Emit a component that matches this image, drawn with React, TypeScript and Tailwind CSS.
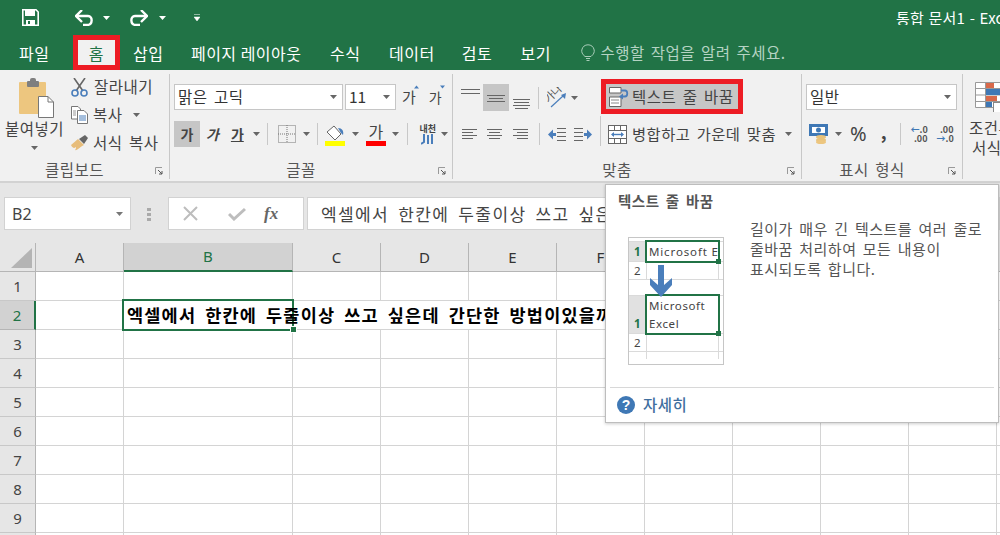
import React from "react";

const Caret = ({ c = "#666", className = "" }: { c?: string; className?: string }) => (
  <svg width="7" height="4" viewBox="0 0 7 4" className={className}>
    <path d="M0 0h7L3.500 4z" fill={c} />
  </svg>
);

const Launcher = () => (
  <svg width="8" height="8" viewBox="0 0 8 8" className="absolute right-[6px] top-[6px]">
    <path d="M0.500 7V0.500H7" fill="none" stroke="#999" />
    <path d="M3 3l4 4M7 4v3H4" fill="none" stroke="#555" />
  </svg>
);

const Sep = ({ className = "" }: { className?: string }) => <div className={`w-px h-[22px] bg-[#c8c8c8] shrink-0 ${className}`} />;

const Lines = ({ rows, w = 18 }: { rows: [number, number, number][]; w?: number }) => (
  <svg width={w} height="14" viewBox={`0 0 ${w} 14`}>
    {rows.map(([y, a, b], i) => (
      <path key={i} d={`M${a} ${y + 0.5}H${b}`} stroke="#666" fill="none" />
    ))}
  </svg>
);

const Group = ({ w, label, launcher = true, children }: { w: string; label?: string; launcher?: boolean; children: React.ReactNode }) => (
  <div className={`${w} h-[105px] mt-[4px] flex flex-col border-r border-[#c8c8c8] shrink-0`}>
    <div className="h-[87px] relative">{children}</div>
    <div className="h-[18px] relative flex items-center justify-center pr-[20px] text-[15.500px] leading-none text-[#555]">
      {label}
      {launcher && <Launcher />}
    </div>
  </div>
);

const Combo = ({ w, text, pad = "pl-[3px]" }: { w: string; text: string; pad?: string }) => (
  <div className={`${w} h-[26px] bg-white border border-[#c6c6c6] flex items-center justify-between ${pad} pr-[5px] text-[15.500px] text-[#333] shrink-0`}>
    <span className="leading-none">{text}</span>
    <Caret />
  </div>
);

const Paste = () => (
  <svg width="36" height="40" viewBox="0 0 36 40">
    <rect x="0" y="4" width="27" height="32" rx="1" fill="#edc67f" />
    <rect x="8" y="3" width="12" height="6" rx="1" fill="#7f7f7f" />
    <rect x="11" y="0" width="6" height="5" rx="2" fill="#7f7f7f" />
    <path d="M19.500 18.500H29l5.500 5.500v15.500h-15z" fill="#fff" stroke="#777" />
    <path d="M29 18.500V24h5.500" fill="none" stroke="#777" />
  </svg>
);

const Scissors = () => (
  <svg width="18" height="19" viewBox="0 0 18 19">
    <path d="M3 0l9 13M14 0L5 13" stroke="#666" strokeWidth="1.600" fill="none" />
    <circle cx="4" cy="15" r="3" fill="none" stroke="#4a7ebb" strokeWidth="1.600" />
    <circle cx="13" cy="15" r="3" fill="none" stroke="#4a7ebb" strokeWidth="1.600" />
  </svg>
);

const CopyIcon = () => (
  <svg width="17" height="18" viewBox="0 0 17 18">
    <path d="M0.500 0.500H7l2.500 2.500v10H0.500z" fill="#fff" stroke="#777" />
    <path d="M6.500 4.500H13l3.500 3.500v9.500h-10z" fill="#fff" stroke="#777" />
    <path d="M8 10h7M8 12h7M8 14h7" stroke="#4a7ebb" />
    <path d="M2 5h3M2 7h3M2 9h3" stroke="#999" />
  </svg>
);

const Brush = () => (
  <svg width="18" height="16" viewBox="0 0 18 16">
    <path d="M0 10l7-6 6 6c-3 1-7 6-9 5 1-1 1-2 1-3-1 1-3 2-5-2z" fill="#e7bd7b" />
    <path d="M8 4l6-4 3 3-4 6z" fill="#666" />
  </svg>
);

const WrapIcon = () => (
  <svg width="20" height="20" viewBox="0 0 20 20">
    <path d="M0.500 0.500H12V6H0.500zM0.500 10H12v9.500H0.500z" fill="#fff" stroke="#666" />
    <path d="M2 13h8M2 16h8" stroke="#888" />
    <path d="M12 3.500h4c3 0 3 6 0 6h-3" fill="none" stroke="#4a7ebb" strokeWidth="1.800" />
    <path d="M14 6.500l-4 3 4 3z" fill="#4a7ebb" />
  </svg>
);

const MergeIcon = () => (
  <svg width="19" height="19" viewBox="0 0 19 19">
    <rect x="0.500" y="0.500" width="18" height="18" fill="#fff" stroke="#666" />
    <path d="M0 5.500h19M0 13.500h19M6.500 0v5M12.500 0v5M6.500 14v5M12.500 14v5" stroke="#666" />
    <path d="M4 9.500h11" stroke="#4a7ebb" strokeWidth="1.400" />
    <path d="M6 7L3 9.500 6 12zM13 7l3 2.500L13 12z" fill="#4a7ebb" />
  </svg>
);

const BordersIcon = () => (
  <svg width="18" height="18" viewBox="0 0 18 18">
    <path d="M0.500 0.500h17v17h-17zM9 0v18M0 9h18" fill="none" stroke="#777" strokeDasharray="1 1" />
  </svg>
);

const Bucket = () => (
  <svg width="21" height="21" viewBox="0 0 21 21">
    <path d="M2 7l7-6 7 8-6 6z" fill="#fff" stroke="#666" />
    <path d="M13 3c4 0 6 3 5 7l-2-2z" fill="#4a7ebb" />
    <rect x="0" y="16" width="20" height="5" fill="#ffff00" />
  </svg>
);

const IndentIcon = ({ flip }: { flip?: boolean }) => (
  <svg width="18" height="15" viewBox="0 0 18 15" className={flip ? "-scale-x-100" : ""}>
    <path d="M9 1.500h9M9 5.500h9M9 9.500h9M9 13.500h9" stroke="#666" fill="none" />
    <path d="M8 7.500H3" stroke="#4a7ebb" strokeWidth="3" />
    <path d="M5 2.500L0 7.500l5 5z" fill="#4a7ebb" />
  </svg>
);

const Currency = () => (
  <svg width="19" height="20" viewBox="0 0 19 20">
    <rect x="0" y="0" width="19" height="12" fill="#3f78b5" />
    <rect x="3" y="3" width="13" height="6" fill="#fff" />
    <circle cx="9.500" cy="6" r="2.500" fill="#3f78b5" />
    <ellipse cx="12" cy="13" rx="5" ry="2" fill="#e8c27b" />
    <ellipse cx="12" cy="16" rx="5" ry="2" fill="#e8c27b" />
    <ellipse cx="12" cy="18" rx="5" ry="2" fill="#edc67f" />
  </svg>
);

const CondIcon = () => (
  <svg width="25" height="30" viewBox="0 0 25 30">
    <path d="M0.500 0.500h25v25h-25zM0 6.500h25M0 13h25M0 19.500h25M10.500 0v26" fill="#fff" stroke="#999" />
    <rect x="11" y="1" width="8" height="5" fill="#d9694a" />
    <rect x="11" y="7" width="14" height="6" fill="#3f78b5" />
    <rect x="11" y="14" width="11" height="5" fill="#d9694a" />
    <rect x="11" y="20" width="6" height="5" fill="#3f78b5" />
    <rect x="18.500" y="20.500" width="10" height="10" fill="#fff" stroke="#888" />
  </svg>
);

const Orientation = () => (
  <svg width="21" height="22" viewBox="0 0 21 22" className="tracking-normal [word-spacing:0]">
    <text x="0" y="13" fontSize="11" fill="#555" transform="rotate(-45 5 13)">가나</text>
    <path d="M4 20L16 9" stroke="#4a7ebb" strokeWidth="1.200" fill="none" />
    <path d="M19 6l-1 6-4-4z" fill="#4a7ebb" />
  </svg>
);

const Picture = () => (
  <svg width="97" height="128" viewBox="0 0 97 128" className="shrink-0 tracking-normal [word-spacing:0]" style={{ fontFamily: "'Noto Sans', sans-serif" }}>
    <rect x="0.500" y="0.500" width="95" height="127" fill="#fff" stroke="#c6c6c6" />
    <rect x="1" y="4" width="17" height="20" fill="#e1e1e1" />
    <rect x="1" y="58" width="17" height="38" fill="#e1e1e1" />
    <path d="M1 4.500h94M1 24.500h94M1 42.500h94M1 58.500h94M1 96.500h94M1 114.500h94M18.500 4v38M18.500 58v64M90.500 4v38M90.500 58v64" stroke="#dadada" fill="none" />
    <rect x="18" y="4" width="73" height="21" fill="#fff" stroke="#217346" strokeWidth="2" />
    <text x="21" y="19" fontSize="11.500" fill="#444" textLength="69">Microsoft E</text>
    <rect x="88" y="22" width="5" height="5" fill="#217346" />
    <text x="6" y="19" fontSize="11.500" fontWeight="700" fill="#217346">1</text>
    <text x="6" y="38" fontSize="11.500" fill="#444">2</text>
    <rect x="18" y="58" width="73" height="39" fill="#fff" stroke="#217346" strokeWidth="2" />
    <text x="21" y="73" fontSize="11.500" fill="#444" letterSpacing="0.600">Microsoft</text>
    <text x="21" y="91" fontSize="11.500" fill="#444" letterSpacing="0.600">Excel</text>
    <rect x="88" y="94" width="5" height="5" fill="#217346" />
    <text x="6" y="91" fontSize="11.500" fontWeight="700" fill="#217346">1</text>
    <text x="6" y="110" fontSize="11.500" fill="#444">2</text>
    <path d="M30 28h6v20l8-7v7L33 60 22 48v-7l8 7z" fill="#4a7ebb" />
  </svg>
);

const cols = ["A", "B", "C", "D", "E", "F", "G", "H", "I", "J", "K"];

export default function App() {
  return (
    <div className="relative w-[1000px] h-[535px] overflow-hidden bg-white tracking-[0.500px] [word-spacing:2.500px] font-['Noto_Sans_CJK_KR','Noto_Sans',sans-serif]">
      <div className="bg-[#217346] h-[70px]">
        <div className="h-[35px] flex items-center text-white relative">
          <svg width="17" height="17" viewBox="0 0 17 17" className="ml-[22px]">
            <path d="M0.800 0.800H14l2.200 2.200v13.200H0.800z" fill="none" stroke="#fff" strokeWidth="1.600" />
            <rect x="3" y="1" width="10" height="6" fill="#fff" />
            <rect x="4" y="11" width="9" height="5" fill="#fff" />
            <rect x="6" y="12" width="2" height="3" fill="#217346" />
          </svg>
          <svg width="19" height="16" viewBox="0 0 19 16" className="ml-[36px]">
            <path d="M2 6h11c5 0 5 9-1 9H8" fill="none" stroke="#fff" strokeWidth="2.400" />
            <path d="M7 0L1 6l6 6" fill="none" stroke="#fff" strokeWidth="2.400" />
          </svg>
          <Caret c="#fff" className="ml-[9px]" />
          <svg width="19" height="16" viewBox="0 0 19 16" className="ml-[19px] -scale-x-100">
            <path d="M2 6h11c5 0 5 9-1 9H8" fill="none" stroke="#fff" strokeWidth="2.400" />
            <path d="M7 0L1 6l6 6" fill="none" stroke="#fff" strokeWidth="2.400" />
          </svg>
          <Caret c="#fff" className="ml-[11px]" />
          <svg width="6" height="7" viewBox="0 0 6 7" className="ml-[28px]">
            <path d="M0 0.500h6M0 3l3 4 3-4z" fill="#fff" stroke="#fff" strokeWidth="0.500" />
          </svg>
          <div className="ml-auto w-[104px] whitespace-nowrap overflow-hidden text-[15px] tracking-[0.200px] [word-spacing:1px] leading-none">통합 문서1 - Excel</div>
        </div>
        <div className="h-[35px] flex items-center text-white text-[16px] leading-none whitespace-nowrap [word-spacing:0]">
          <span className="ml-[19px]">파일</span>
          <div className="ml-[23.500px] w-[47px] h-[35px] bg-[#f1f1f1] border-[5px] border-[#ed1c24] text-[#217346] flex items-center justify-center">홈</div>
          <span className="ml-[13px]">삽입</span>
          <span className="ml-[27.500px]">페이지 레이아웃</span>
          <span className="ml-[28.500px]">수식</span>
          <span className="ml-[28.500px]">데이터</span>
          <span className="ml-[27px]">검토</span>
          <span className="ml-[28.500px]">보기</span>
          <svg width="14" height="18" viewBox="0 0 14 18" className="ml-[29.500px]">
            <path d="M4 12.500C1 10 0.500 8 0.800 6 1.500 2.500 4 0.800 7 0.800s5.500 1.700 6.200 5.200c.3 2-.2 4-3.200 6.500z" fill="none" stroke="#a9cdb9" />
            <path d="M5 14.500h4M5.500 16.500h3" stroke="#a9cdb9" />
          </svg>
          <span className="ml-[6px] text-[#b5d3c3] text-[15.500px] [word-spacing:2px]">수행할 작업을 알려 주세요.</span>
        </div>
      </div>

      <div className="h-[113px] bg-[#f1f1f1] border-b-2 border-[#d2d2d2] flex text-[#444] whitespace-nowrap overflow-hidden">
        <Group w="w-[170px]" label="클립보드">
          <div className="flex h-full">
            <div className="w-[68px] flex flex-col items-center pl-[1px]">
              <div className="mt-[4px] ml-[4px]"><Paste /></div>
              <div className="text-[15.500px] leading-[20px] h-[20px]">붙여넣기</div>
              <Caret className="mt-[8px]" />
            </div>
            <div className="ml-[3px] flex flex-col gap-[2px] text-[15.500px]">
              <div className="h-[26px] flex items-center gap-[5px]"><Scissors /><span>잘라내기</span></div>
              <div className="h-[26px] flex items-center"><CopyIcon /><span className="ml-[5px]">복사</span><Caret className="ml-[10px]" /></div>
              <div className="h-[26px] flex items-center gap-[4px]"><Brush /><span>서식 복사</span></div>
            </div>
          </div>
        </Group>

        <Group w="w-[283px]" label="글꼴">
          <div className="pl-[4px] pt-[10px]">
            <div className="flex items-center tracking-normal">
              <Combo w="w-[169px] tracking-[0.500px]" text="맑은 고딕" />
              <Combo w="w-[51px] ml-[2px]" text="11" />
              <div className="ml-[6px] text-[15px] relative">가<span className="absolute -right-[3px] -top-[1px]"><Caret c="#4a7ebb" className="rotate-180 w-[5px]" /></span></div>
              <div className="ml-[13px] text-[14px] relative">가<span className="absolute -right-[3px] -top-[2px]"><Caret c="#4a7ebb" className="w-[5px]" /></span></div>
            </div>
            <div className="flex items-center mt-[11px] h-[26px] tracking-normal">
              <div className="w-[26px] h-[26px] bg-[#c6c6c6] flex items-center justify-center font-bold text-[14px]">가</div>
              <span className="ml-[6px] italic font-bold text-[14px]">가</span>
              <span className="ml-[12px] underline font-bold text-[14px]">가</span>
              <Caret className="ml-[9px]" />
              <Sep className="ml-[7px]" />
              <div className="ml-[10px]"><BordersIcon /></div>
              <Caret className="ml-[7px]" />
              <Sep className="ml-[7px]" />
              <div className="ml-[7px] mt-[2px]"><Bucket /></div>
              <Caret className="ml-[6px]" />
              <div className="ml-[7px] w-[20px] flex flex-col items-center text-[16px] leading-[19px] h-[25px]">
                가
                <div className="w-[20px] h-[5px] bg-[#ff0000]" />
              </div>
              <Caret className="ml-[6px]" />
              <Sep className="ml-[8px]" />
              <div className="ml-[6px] w-[28px] flex flex-col items-center">
                <span className="text-[9px] leading-[10px] font-bold">내천</span>
                <svg width="14" height="11" viewBox="0 0 14 11"><path d="M3 0v8L0 10M7 1v9M11 0v10" stroke="#4a7ebb" strokeWidth="2" fill="none" /></svg>
              </div>
              <Caret className="-ml-[1px]" />
            </div>
          </div>
        </Group>

        <Group w="w-[349px]" label="맞춤">
          <div className="flex h-full">
            <div className="w-[147px] pt-[10px] shrink-0">
              <div className="flex items-center h-[27px] pl-[8px]">
                <div className="-mt-[6px]"><Lines rows={[[1,0,19],[5,0,19]]} w={19} /></div>
                <div className="w-[26px] h-[27px] ml-[3px] bg-[#c6c6c6] flex items-center justify-center"><Lines rows={[[4,2,20],[7,4,18],[10,2,20]]} w={22} /></div>
                <div className="ml-[3px] mt-[8px]"><Lines rows={[[4,1,18],[7,2,17],[10,1,18],[13,3,16]]} /></div>
                <Sep className="ml-[8px]" />
                <div className="ml-[8px]"><Orientation /></div>
                <Caret className="ml-[3px]" />
              </div>
              <div className="flex items-center h-[26px] mt-[10px] pl-[9px]">
                <Lines rows={[[2,0,15],[5,0,11],[8,0,15],[11,0,11]]} w={15} />
                <div className="ml-[10px]"><Lines rows={[[2,0,15],[5,2,13],[8,0,15],[11,2,13]]} w={15} /></div>
                <div className="ml-[11px]"><Lines rows={[[2,0,15],[5,4,15],[8,0,15],[11,4,15]]} w={15} /></div>
                <Sep className="ml-[11px]" />
                <div className="ml-[8px]"><IndentIcon /></div>
                <div className="ml-[8px]"><IndentIcon flip /></div>
              </div>
            </div>
            <div className="pl-[1px]">
              <div className="mt-[5px] w-[142px] h-[35px] border-[5px] border-[#ed1c24] bg-[#c6c6c6] flex items-center pl-[3px] gap-[3px] text-[15.500px]">
                <WrapIcon /><span className="leading-none">텍스트 줄 바꿈</span>
              </div>
              <div className="mt-[7px] h-[26px] flex items-center text-[15.300px] pl-[7px]">
                <MergeIcon /><span className="ml-[5px] leading-none">병합하고 가운데 맞춤</span><Caret className="ml-[9px]" />
              </div>
            </div>
          </div>
          <div className="absolute left-[147px] top-[42px] w-px h-[30px] bg-[#c8c8c8]" />
        </Group>

        <Group w="w-[161px]" label="표시 형식">
          <div className="pl-[4px] pt-[10px]">
            <Combo w="w-[151px]" text="일반" />
            <div className="flex items-center mt-[11px] h-[26px] tracking-normal">
              <div className="ml-[3px]"><Currency /></div>
              <Caret className="ml-[7px]" />
              <span className="ml-[8px] text-[20px] leading-none font-['Noto_Sans',sans-serif]">%</span>
              <span className="ml-[14px] text-[18px] font-bold leading-none -mt-[6px]">,</span>
              <Sep className="ml-[14px]" />
              <div className="ml-[9px] w-[17px] text-[9px] leading-[9px] font-bold text-[#555] text-right">
                <div><span className="text-[#3f78b5]">←</span>.0</div><div>.00</div>
              </div>
              <div className="ml-[9px] w-[17px] text-[9px] leading-[9px] font-bold text-[#555] text-right">
                <div>.00</div><div><span className="text-[#3f78b5]">→</span>.0</div>
              </div>
            </div>
          </div>
        </Group>

        <div className="pl-[12px] pt-[12px] flex flex-col items-start">
          <CondIcon />
          <span className="mt-[5px] -ml-[6px] text-[15.500px] leading-[20px]">조건부</span>
          <span className="-ml-[3px] text-[15.500px] leading-[20px]">서식</span>
        </div>
      </div>

      <div className="h-[60px] bg-[#e6e6e6] flex items-start pt-[14px] pl-[4px]">
        <div className="w-[127px] h-[33px] bg-white border border-[#d2d2d2] flex items-center justify-between pl-[7px] pr-[7px] text-[#444] text-[16px] tracking-normal font-['Noto_Sans',sans-serif]">
          B2<Caret c="#777" />
        </div>
        <div className="ml-[16px] w-[5px] flex flex-col gap-[2px] mt-[11px]">
          <div className="w-[4px] h-[3px] bg-[#aaa]" /><div className="w-[4px] h-[3px] bg-[#aaa]" /><div className="w-[4px] h-[3px] bg-[#aaa]" />
        </div>
        <div className="ml-[16px] w-[136px] h-[33px] bg-white border border-[#d2d2d2] flex items-center shrink-0 tracking-normal">
          <svg width="15" height="15" viewBox="0 0 15 15" className="ml-[14px]"><path d="M1 1l13 13M14 1L1 14" stroke="#bdbdbd" strokeWidth="2" /></svg>
          <svg width="18" height="14" viewBox="0 0 18 14" className="ml-[30px]"><path d="M1 7l5 5L17 2" stroke="#bdbdbd" strokeWidth="3" fill="none" /></svg>
          <span className="ml-[18px] font-['Liberation_Serif',serif] italic font-bold text-[17px] text-[#666] leading-none">fx</span>
        </div>
        <div className="ml-[3px] flex-1 h-[33px] bg-white border border-[#d2d2d2] flex items-center pl-[13px] text-[17px] tracking-[1.400px] [word-spacing:3.800px] text-[#444] whitespace-nowrap overflow-hidden">
          엑셀에서 한칸에 두줄이상 쓰고 싶은데 간단한 방법이있을까
        </div>
      </div>

      <div className="grid grid-cols-[36px_88px_169px_88px_88px_88px_88px_88px_88px_88px_88px_88px] grid-rows-[29px_repeat(10,29px)] tracking-normal [word-spacing:0]">
        <div className="bg-[#e6e6e6] border-r border-b border-[#b5b5b5] relative">
          <svg width="21" height="20" viewBox="0 0 21 20" className="absolute left-[11px] top-[5px]"><path d="M21 0v20H0z" fill="#b4b4b4" /></svg>
        </div>
        {cols.map((c) => (
          <div key={c} className={`border-r border-[#b5b5b5] flex items-center justify-center text-[15px] ${c === "B" ? "bg-[#d2d2d2] border-b-2 border-b-[#217346] text-[#217346]" : "bg-[#e6e6e6] border-b border-b-[#b5b5b5] text-[#333]"} font-['Noto_Sans',sans-serif]`}>{c}</div>
        ))}
        {[1, 2, 3, 4, 5, 6, 7, 8, 9, 10].map((r) => (
          <React.Fragment key={r}>
            <div className={`flex items-center justify-center text-[15px] border-b font-['Noto_Sans',sans-serif] ${r === 2 ? "bg-[#d2d2d2] text-[#217346] border-b-[#b5b5b5] border-r-2 border-r-[#217346]" : "bg-[#e6e6e6] text-[#444] border-b-[#c8c8c8] border-r border-r-[#b5b5b5]"}`}>{r}</div>
            {cols.map((c) => {
              const sel = r === 2 && c === "B";
              return (
                <div key={c} className={`border-b border-[#d4d4d4] relative ${r === 2 && (c === "C" || c === "D" || c === "E" || c === "F") ? "" : "border-r"} ${sel ? "z-10" : ""}`}>
                  {sel && (
                    <>
                      <div className="absolute -left-[2px] -top-[2px] w-[172px] h-[32px] border-2 border-[#217346]" />
                      <div className="absolute left-[167px] top-[26px] w-[5px] h-[5px] bg-[#217346] outline outline-1 outline-white" />
                      <div className="absolute left-[3px] top-0 h-[28px] flex items-center text-[17.500px] tracking-[1.200px] [word-spacing:3.800px] font-bold text-black whitespace-nowrap leading-none">엑셀에서 한칸에 두줄이상 쓰고 싶은데 간단한 방법이있을까</div>
                    </>
                  )}
                </div>
              );
            })}
          </React.Fragment>
        ))}
      </div>

      <div className="absolute left-[605px] top-[184px] z-20 w-[394px] h-[239px] bg-white border border-[#bdbdbd] shadow-[0_1px_3px_rgba(0,0,0,0.2)] flex flex-col">
        <div className="pl-[12px] pt-[7px] h-[35px] font-bold text-[14.500px] leading-[18px] text-[#555]">텍스트 줄 바꿈</div>
        <div className="flex flex-1 pl-[22px] pt-[17px]">
          <Picture />
          <div className="ml-[25px] -mt-[18px] text-[15px] leading-[20px] text-[#555] whitespace-nowrap">
            <div>길이가 매우 긴 텍스트를 여러 줄로</div>
            <div>줄바꿈 처리하여 모든 내용이</div>
            <div>표시되도록 합니다.</div>
          </div>
        </div>
        <div className="mx-[4px] border-t border-[#d8d8d8] h-[35px] flex items-center pl-[7px]">
          <div className="w-[18px] h-[18px] rounded-full bg-[#3f78b5] text-white text-[14px] font-bold leading-none flex items-center justify-center tracking-normal font-['Liberation_Sans',sans-serif]">?</div>
          <span className="ml-[8px] text-[15.500px] font-medium leading-none text-[#3f6f9f]">자세히</span>
        </div>
      </div>
    </div>
  );
}
